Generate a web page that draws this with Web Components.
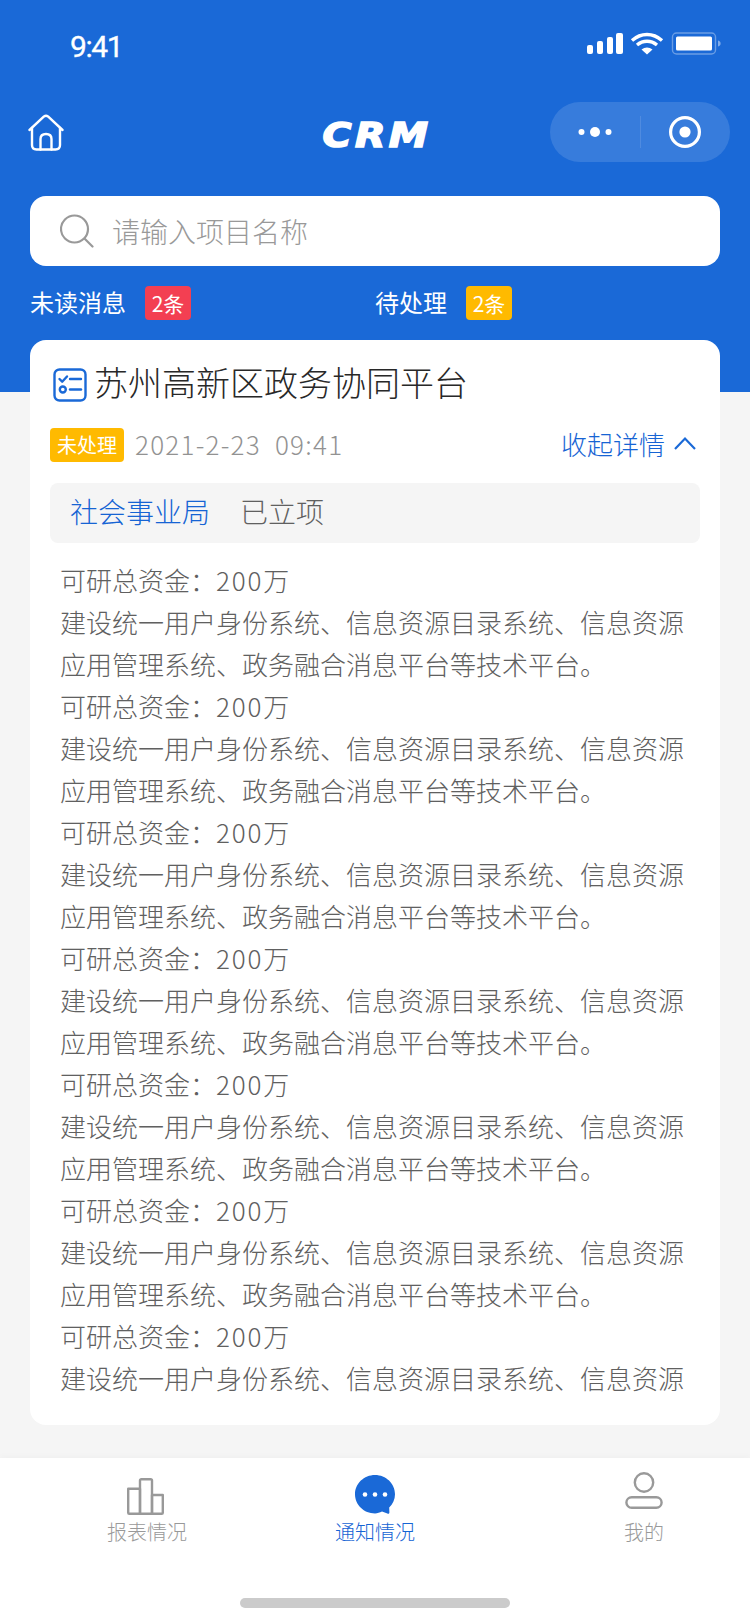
<!DOCTYPE html>
<html lang="zh">
<head>
<meta charset="utf-8"/>
<title>CRM</title>
<style>
  html, body { margin: 0; padding: 0; }
  body { width: 750px; height: 1624px; overflow: hidden; background: #f5f5f5; font-family: "Noto Sans CJK SC", "Liberation Sans", sans-serif; }
</style>
</head>
<body>
<crm-app>
  <status-bar slot="top"></status-bar>
  <nav-bar slot="top"></nav-bar>
  <search-box slot="top">请输入项目名称</search-box>
  <summary-row slot="top"></summary-row>
  <project-card></project-card>
  <tab-bar slot="bottom"></tab-bar>
</crm-app>

<script>
const FONT = '"Noto Sans CJK SC", "Liberation Sans", sans-serif';

class CrmApp extends HTMLElement {
  constructor() {
    super();
    this.attachShadow({ mode: 'open' }).innerHTML = `
      <style>
        :host { display: flex; flex-direction: column; width: 750px; height: 1624px; font-family: ${FONT}; font-weight: 300; background: linear-gradient(#1a69d7 392px, #f5f5f5 392px); }
        .main { padding: 0 30px; flex: 1; min-height: 0; }
      </style>
      <div class="top"><slot name="top"></slot></div>
      <div class="main"><slot></slot></div>
      <slot name="bottom"></slot>`;
  }
}

class StatusBar extends HTMLElement {
  constructor() {
    super();
    this.attachShadow({ mode: 'open' }).innerHTML = `
      <style>
        :host { display: flex; justify-content: space-between; align-items: center; height: 88px; padding: 0 29px 0 70px; box-sizing: border-box; color: #fff; }
        .time { font: 400 30px "Roboto", sans-serif; letter-spacing: -1.4px; margin-top: 5px; -webkit-text-stroke: .3px #fff; }
        svg { display: block; margin-top: -1px; }
      </style>
      <span class="time">9:41</span>
      <svg width="134" height="24" viewBox="0 0 134 24">
        <g fill="#fff">
          <rect x="0" y="13" width="6" height="9" rx="2"/>
          <rect x="10" y="9" width="6" height="13" rx="2"/>
          <rect x="20" y="5" width="6" height="17" rx="2"/>
          <rect x="29" y="1" width="7" height="21" rx="2"/>
        </g>
        <g fill="none" stroke="#fff" stroke-width="3.4">
          <path d="M45 8.5 C54 0.5 66 0.5 75 8.5"/>
          <path d="M50 13 C56 8 64 8 70 13"/>
        </g>
        <path d="M54.5 17.5 C58 14.7 62 14.7 65.5 17.5 L60 22.5 Z" fill="#fff"/>
        <rect x="85.5" y="1" width="43" height="21" rx="4" fill="none" stroke="#fff" stroke-opacity=".35" stroke-width="1.4"/>
        <rect x="89" y="4.5" width="36" height="14" rx="1.5" fill="#fff"/>
        <path d="M131 8.5 C133 9 133.6 10.2 133.6 11.5 C133.6 12.8 133 14 131 14.5 Z" fill="#fff" fill-opacity=".45"/>
      </svg>`;
  }
}

class NavBar extends HTMLElement {
  constructor() {
    super();
    this.attachShadow({ mode: 'open' }).innerHTML = `
      <style>
        :host { display: grid; grid-template-columns: 1fr auto 1fr; align-items: center; height: 88px; margin-bottom: 20px; padding: 0 20px; }
        .home { display: block; margin-left: 8px; }
        .logo { color: #fff; font: italic 700 34px "DejaVu Sans", sans-serif; line-height: 1; letter-spacing: 3px; margin: 5px -3px 0 0; -webkit-text-stroke: 1.6px #fff; transform: scaleX(1.16); }
        .capsule { justify-self: end; width: 180px; height: 60px; border-radius: 30px; background: rgba(255,255,255,.13); display: flex; align-items: center; }
        .capsule span { flex: 1; display: flex; justify-content: center; align-items: center; }
        .capsule i { width: 1px; height: 32px; background: rgba(255,255,255,.12); }
      </style>
      <svg class="home" width="36" height="37" viewBox="0 0 36 37" fill="none" stroke="#fff" stroke-width="2.4" stroke-linecap="round" stroke-linejoin="round">
        <path d="M1.5 16 L16 2.4 Q18 1 20 2.4 L34.5 16"/>
        <path d="M4 14 V31 Q4 35.5 8.5 35.5 H27.5 Q32 35.5 32 31 V14"/>
        <path d="M12.5 35.5 V25 Q12.5 20 18 20 Q23.5 20 23.5 25 V35.5"/>
      </svg>
      <span class="logo">CRM</span>
      <div class="capsule">
        <span>
          <svg width="34" height="14" viewBox="0 0 34 14" fill="#fff"><circle cx="3.5" cy="7" r="3"/><circle cx="17" cy="7" r="5"/><circle cx="30.5" cy="7" r="3"/></svg>
        </span>
        <i></i>
        <span>
          <svg width="34" height="34" viewBox="0 0 34 34"><circle cx="17" cy="17" r="14.4" fill="none" stroke="#fff" stroke-width="3.2"/><circle cx="17" cy="17" r="5.6" fill="#fff"/></svg>
        </span>
      </div>`;
  }
}

class SearchBox extends HTMLElement {
  constructor() {
    super();
    this.attachShadow({ mode: 'open' }).innerHTML = `
      <style>
        :host { display: flex; align-items: center; margin: 0 30px; height: 70px; padding-left: 30px; border-radius: 16px; background: #fff; color: #999; font-size: 28px; line-height: 40px; gap: 18px; }
        svg { display: block; }
      </style>
      <svg width="34" height="34" viewBox="0 0 34 34" fill="none" stroke="#999" stroke-width="2.2" stroke-linecap="round">
        <circle cx="14.5" cy="15" r="13.5"/><path d="M25 25 L32.5 32.5"/>
      </svg>
      <slot></slot>`;
  }
}

class CountBadge extends HTMLElement {
  constructor() {
    super();
    this.attachShadow({ mode: 'open' }).innerHTML = `
      <style>
        :host { display: inline-flex; align-items: center; justify-content: center; width: 46px; height: 34px; border-radius: 4px; color: #fff; font-size: 21px; line-height: 34px; font-weight: 400; background: var(--badge, #f33f52); white-space: nowrap; }
      </style>
      <slot></slot>`;
  }
}

class SummaryRow extends HTMLElement {
  constructor() {
    super();
    this.attachShadow({ mode: 'open' }).innerHTML = `
      <style>
        :host { display: grid; grid-template-columns: 345px 1fr; margin: 0 30px; height: 74px; align-items: center; color: #fff; font-size: 24px; line-height: 34px; }
        div { display: flex; align-items: center; gap: 19px; }
        .wait { --badge: #ffba00; }
        div > span { margin-top: -2px; font-weight: 400; }
      </style>
      <div><span>未读消息</span><count-badge>2条</count-badge></div>
      <div class="wait"><span>待处理</span><count-badge>2条</count-badge></div>`;
  }
}

class InfoBlock extends HTMLElement {
  constructor() {
    super();
    this.attachShadow({ mode: 'open' }).innerHTML = `
      <style>
        :host { display: block; color: #606060; font-size: 26px; line-height: 42px; }
        p { margin: 0; }
        .n { letter-spacing: 1.8px; }
      </style>
      <p>可研总资金：<span class="n">200</span>万</p>
      <p class="desc">建设统一用户身份系统、信息资源目录系统、信息资源</p>
      <p class="more">应用管理系统、政务融合消息平台等技术平台。</p>`;
  }
  connectedCallback() {
    if (this.hasAttribute('short')) this.shadowRoot.querySelector('.more').remove();
  }
}

class ProjectCard extends HTMLElement {
  constructor() {
    super();
    let blocks = '';
    for (let i = 0; i < 7; i++) blocks += i < 6 ? '<info-block></info-block>' : '<info-block short></info-block>';
    this.attachShadow({ mode: 'open' }).innerHTML = `
      <style>
        :host { display: block; width: 690px; height: 1085px; background: #fff; border-radius: 16px; padding: 0 20px; box-sizing: border-box; }
        .title { display: flex; align-items: center; height: 88px; padding-left: 3px; gap: 7px; font-size: 34px; line-height: 44px; color: #282828; }
        .title span { margin-top: -4px; }
        .title svg { display: block; margin-top: 1px; }
        .meta { display: flex; align-items: center; height: 34px; font-size: 26px; line-height: 34px; color: #929292; }
        .state { display: inline-flex; align-items: center; justify-content: center; width: 74px; height: 34px; border-radius: 4px; background: #ffba00; color: #fff; font-size: 20px; font-weight: 400; margin-right: 11px; }
        .date { letter-spacing: 1.25px; white-space: pre; margin-top: -2px; }
        .toggle { margin-left: auto; display: flex; align-items: center; gap: 9px; color: #1664d4; padding-right: 4px; margin-top: -3px; }
        .dept { display: flex; align-items: center; gap: 30px; height: 60px; margin-top: 21px; padding-left: 20px; border-radius: 8px; background: #f5f5f5; font-size: 28px; line-height: 38px; color: #606060; }
        .dept b, .dept span { font-weight: inherit; margin-top: -4px; }
        .dept b { color: #1664d4; }
        .body { padding: 16px 0 0 10px; }
      </style>
      <div class="title">
        <svg width="34" height="34" viewBox="0 0 34 34" fill="none" stroke="#1a69d7" stroke-width="2.4" stroke-linecap="round" stroke-linejoin="round">
          <rect x="1.5" y="1.5" width="31" height="31" rx="5"/>
          <path d="M6.5 11 L9.2 13.7 L14 8.5"/>
          <path d="M17 11 H28"/>
          <circle cx="9.8" cy="21.5" r="3"/>
          <path d="M17 21.5 H28"/>
        </svg>
        <span>苏州高新区政务协同平台</span>
      </div>
      <div class="meta">
        <span class="state">未处理</span>
        <span class="date">2021-2-23  09:41</span>
        <span class="toggle">收起详情
          <svg width="22" height="13" viewBox="0 0 22 13" fill="none" stroke="#1a69d7" stroke-width="2.2"><path d="M1 12 L11 1.6 L21 12"/></svg>
        </span>
      </div>
      <div class="dept"><b>社会事业局</b><span>已立项</span></div>
      <div class="body">${blocks}</div>`;
  }
}

class TabItem extends HTMLElement {
  constructor() {
    super();
    this.attachShadow({ mode: 'open' }).innerHTML = `
      <style>
        :host { display: flex; flex-direction: column; align-items: center; color: #999; font-size: 20px; line-height: 26px; }
        :host([active]) { color: #1664d4; }
        .ico { height: 44px; margin-bottom: 3px; }
      </style>
      <div class="ico"><slot name="icon"></slot></div>
      <slot></slot>`;
  }
}

class TabBar extends HTMLElement {
  constructor() {
    super();
    this.attachShadow({ mode: 'open' }).innerHTML = `
      <style>
        :host { display: flex; flex-direction: column; height: 166px; background: #fff; box-shadow: 0 -2px 6px rgba(0,0,0,.025); }
        .tabs { display: flex; padding: 14px 0 0 107px; }
        tab-item:nth-child(2) { margin-left: 148px; }
        tab-item:nth-child(3) { margin-left: 209px; }
        svg { display: block; }
        .bars { margin: 6px 0 0 -4px; }
        .bubble { margin-top: 3px; }
        .home-ind { width: 270px; height: 10px; border-radius: 5px; background: #cbcbcb; margin: auto auto 16px; }
      </style>
      <div class="tabs">
        <tab-item>
          <svg class="bars" slot="icon" width="37" height="37" viewBox="0 0 37 37" fill="none" stroke="#999" stroke-width="2.4" stroke-linejoin="round">
            <path d="M1.2 10.8 H13 V35.8 H2.2 Q1.2 35.8 1.2 34.8 Z"/>
            <path d="M13 35.8 V2.6 Q13 1.2 14.4 1.2 H23.6 Q25 1.2 25 2.6 V35.8 Z"/>
            <path d="M25 17 H35.8 V34.8 Q35.8 35.8 34.8 35.8 H25 Z"/>
          </svg>
          报表情况
        </tab-item>
        <tab-item active>
          <svg class="bubble" slot="icon" width="40" height="39" viewBox="0 0 40 39">
            <path d="M20 0 C31 0 40 8.6 40 19.2 C40 24.5 37.8 29 34.2 32.4 L34.4 37.4 C34.4 38.6 33.4 39.2 32.4 38.6 L27 36.6 C24.8 37.6 22.4 38.4 20 38.4 C9 38.4 0 29.8 0 19.2 C0 8.6 9 0 20 0 Z" fill="#1a69d7"/>
            <circle cx="10" cy="19.5" r="2.3" fill="#fff"/><circle cx="20" cy="19.5" r="2.3" fill="#fff"/><circle cx="30" cy="19.5" r="2.3" fill="#fff"/>
          </svg>
          通知情况
        </tab-item>
        <tab-item>
          <svg slot="icon" width="38" height="38" viewBox="0 0 38 38" fill="none" stroke="#999" stroke-width="2.4">
            <circle cx="19" cy="10.5" r="9.2"/>
            <rect x="1.4" y="25.2" width="35.2" height="10.6" rx="5.3"/>
          </svg>
          我的
        </tab-item>
      </div>
      <div class="home-ind"></div>`;
  }
}

customElements.define('crm-app', CrmApp);
customElements.define('status-bar', StatusBar);
customElements.define('nav-bar', NavBar);
customElements.define('search-box', SearchBox);
customElements.define('count-badge', CountBadge);
customElements.define('summary-row', SummaryRow);
customElements.define('info-block', InfoBlock);
customElements.define('project-card', ProjectCard);
customElements.define('tab-item', TabItem);
customElements.define('tab-bar', TabBar);
</script>
</body>
</html>
